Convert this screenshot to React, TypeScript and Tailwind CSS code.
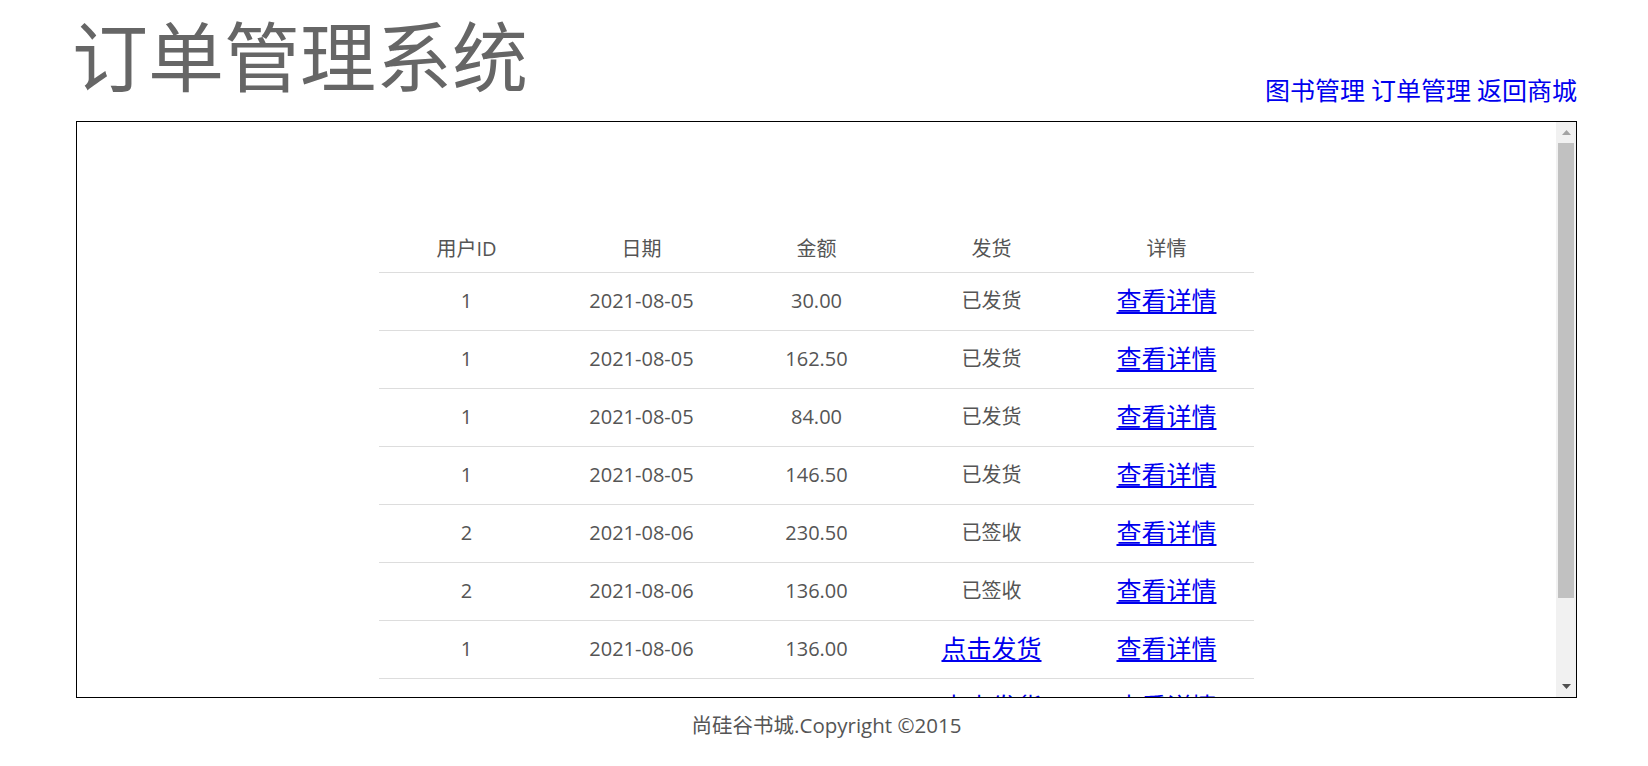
const ORDERS = [
  { uid: 1, date: "2021-08-05", price: "30.00", status: "已发货" },
  { uid: 1, date: "2021-08-05", price: "162.50", status: "已发货" },
  { uid: 1, date: "2021-08-05", price: "84.00", status: "已发货" },
  { uid: 1, date: "2021-08-05", price: "146.50", status: "已发货" },
  { uid: 2, date: "2021-08-06", price: "230.50", status: "已签收" },
  { uid: 2, date: "2021-08-06", price: "136.00", status: "已签收" },
  { uid: 1, date: "2021-08-06", price: "136.00", status: null },
  { uid: 1, date: "2021-08-06", price: "58.00", status: null },
];

const FONT = "font-['Open_Sans','Noto_Sans_CJK_SC',sans-serif]";

export default function App() {
  return (
    <div className={`min-h-screen bg-white ${FONT}`}>
      <div className="ml-[76px] w-[1501px]">
        {/* Header */}
        <div className="flex h-[121px] items-end justify-between">
          <h1 className="-ml-[4px] self-start pt-[19px] text-[76px] leading-none font-normal text-[#666666]">
            订单管理系统
          </h1>
          <nav className="flex gap-[6px] pb-[18px] text-[25px] leading-none">
            <a href="#" className="text-[#0000ee]">图书管理</a>
            <a href="#" className="text-[#0000ee]">订单管理</a>
            <a href="#" className="text-[#0000ee]">返回商城</a>
          </nav>
        </div>

        {/* Frame */}
        <div className="flex h-[577px] border border-black">
          <div className="flex-1 overflow-hidden pt-[104px]">
            <table className="mx-auto w-[875px] table-fixed border-collapse text-center text-[20px] text-[#555555]">
              <thead>
                <tr className="h-[46px] border-b border-[#dddddd]">
                  <th className="font-normal">用户ID</th>
                  <th className="font-normal">日期</th>
                  <th className="font-normal">金额</th>
                  <th className="font-normal">发货</th>
                  <th className="font-normal">详情</th>
                </tr>
              </thead>
              <tbody>
                {ORDERS.map((o, i) => (
                  <tr key={i} className="h-[58px] border-b border-[#dddddd]">
                    <td>{o.uid}</td>
                    <td>{o.date}</td>
                    <td>{o.price}</td>
                    <td>
                      {o.status ? (
                        o.status
                      ) : (
                        <a href="#" className="text-[25px] text-[#0000ee] underline">
                          点击发货
                        </a>
                      )}
                    </td>
                    <td>
                      <a href="#" className="text-[25px] text-[#0000ee] underline">
                        查看详情
                      </a>
                    </td>
                  </tr>
                ))}
              </tbody>
            </table>
          </div>

          {/* Scrollbar */}
          <div className="flex w-[20px] flex-col bg-[#f1f1f1]">
            <div className="flex h-[21px] items-center justify-center">
              <svg width="9" height="5" viewBox="0 0 9 5">
                <path d="M0 5 L4.5 0 L9 5 Z" fill="#a3a3a3" />
              </svg>
            </div>
            <div className="mx-[2px] h-[455px] bg-[#c1c1c1]" />
            <div className="flex-1" />
            <div className="flex h-[21px] items-center justify-center">
              <svg width="9" height="5" viewBox="0 0 9 5">
                <path d="M0 0 L9 0 L4.5 5 Z" fill="#505050" />
              </svg>
            </div>
          </div>
        </div>

        {/* Footer */}
        <p className="mt-[17px] text-center text-[20.5px] leading-none text-[#555555]">
          尚硅谷书城.Copyright ©2015
        </p>
      </div>
    </div>
  );
}
